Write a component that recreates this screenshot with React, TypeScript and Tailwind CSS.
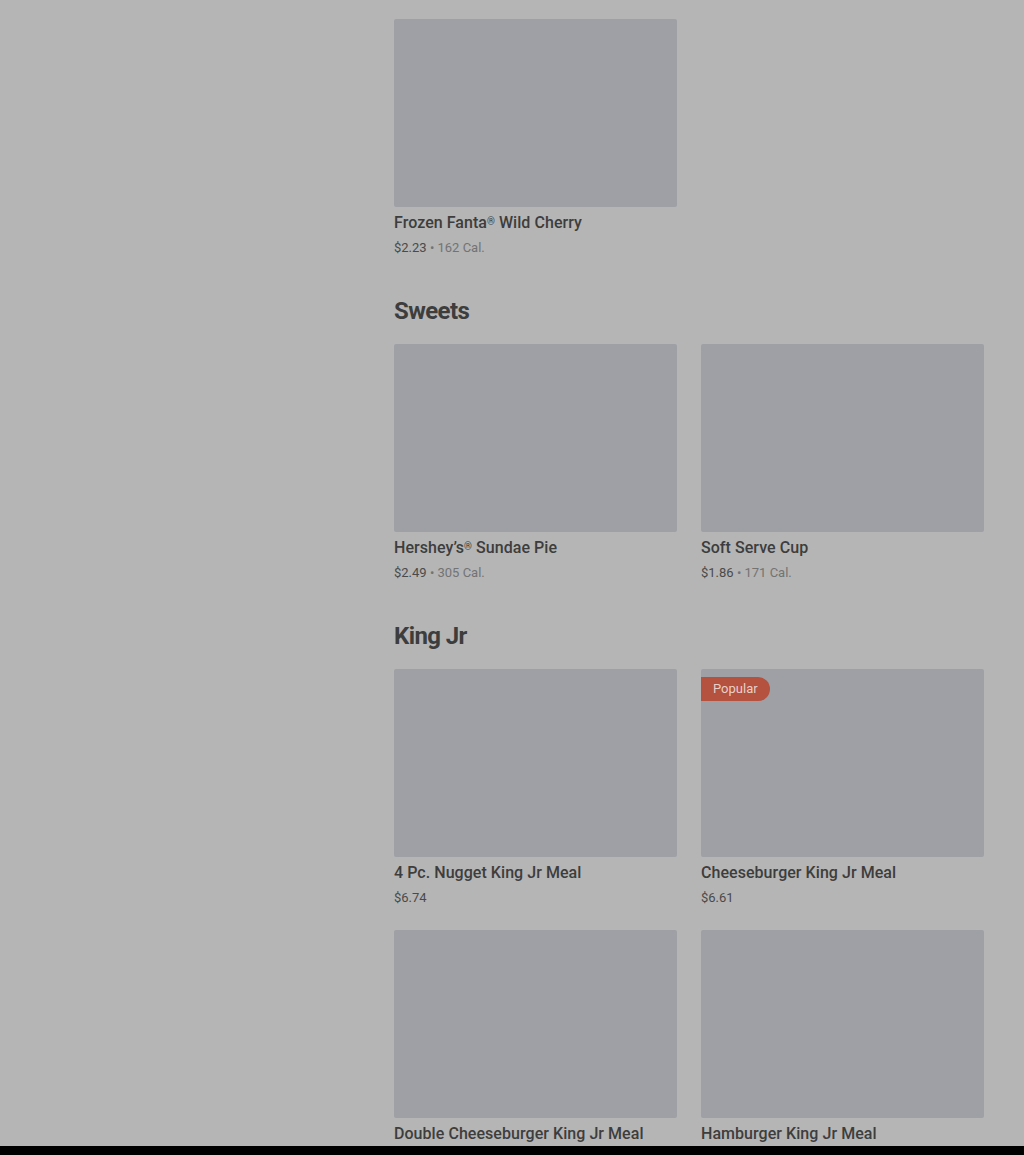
type Item = { name: string; sup?: string; rest?: string; price: string; cal?: string; popular?: boolean };

const sections: { title?: string; items: Item[] }[] = [
  { items: [{ name: "Frozen Fanta", sup: "®", rest: " Wild Cherry", price: "$2.23", cal: "162 Cal." }] },
  {
    title: "Sweets",
    items: [
      { name: "Hershey’s", sup: "®", rest: " Sundae Pie", price: "$2.49", cal: "305 Cal." },
      { name: "Soft Serve Cup", price: "$1.86", cal: "171 Cal." },
    ],
  },
  {
    title: "King Jr",
    items: [
      { name: "4 Pc. Nugget King Jr Meal", price: "$6.74" },
      { name: "Cheeseburger King Jr Meal", price: "$6.61", popular: true },
      { name: "Double Cheeseburger King Jr Meal", price: "$7.39" },
      { name: "Hamburger King Jr Meal", price: "$6.09" },
    ],
  },
];

function MenuCard({ item }: { item: Item }) {
  return (
    <div className="flex flex-col">
      <div className="relative h-[188px] rounded-[2px] bg-[#9ea0a5]">
        {item.popular && (
          <span className="absolute left-0 top-[8px] h-[24px] px-[12px] rounded-r-full bg-[#b4513f] text-[13px] leading-[24px] text-[#e9cfc8]">
            Popular
          </span>
        )}
      </div>
      <p className="mt-[6px] text-[16px] leading-[20px] font-medium text-[#3d3d3d] tracking-[0.05px]">
        {item.name}
        {item.sup && <sup className="text-[10px] top-[-0.35em]">{item.sup}</sup>}
        {item.rest}
      </p>
      <p className="mt-[6px] text-[13px] leading-[18px] text-[#4a4a4a]">
        {item.price}
        {item.cal && <span className="text-[#737373]"> • {item.cal}</span>}
      </p>
    </div>
  );
}

export default function App() {
  return (
    <div
      className="h-[1155px] overflow-hidden bg-[#b5b5b5] relative"
      style={{ fontFamily: "Roboto, 'Liberation Sans', sans-serif" }}
    >
      <div className="ml-[394px] w-[590px] pt-[19px]">
        {sections.map((s, i) => (
          <section key={i}>
            {s.title && (
              <h2 className="mt-[38px] mb-[17px] text-[24px] leading-[32px] font-bold tracking-[-0.6px] text-[#3d3d3d]">
                {s.title}
              </h2>
            )}
            <div className="grid grid-cols-2 gap-x-[24px] gap-y-[23px]">
              {s.items.map((it) => (
                <MenuCard key={it.name} item={it} />
              ))}
            </div>
          </section>
        ))}
      </div>
      <div className="fixed bottom-0 left-0 right-0 h-[9px] bg-black" />
    </div>
  );
}
